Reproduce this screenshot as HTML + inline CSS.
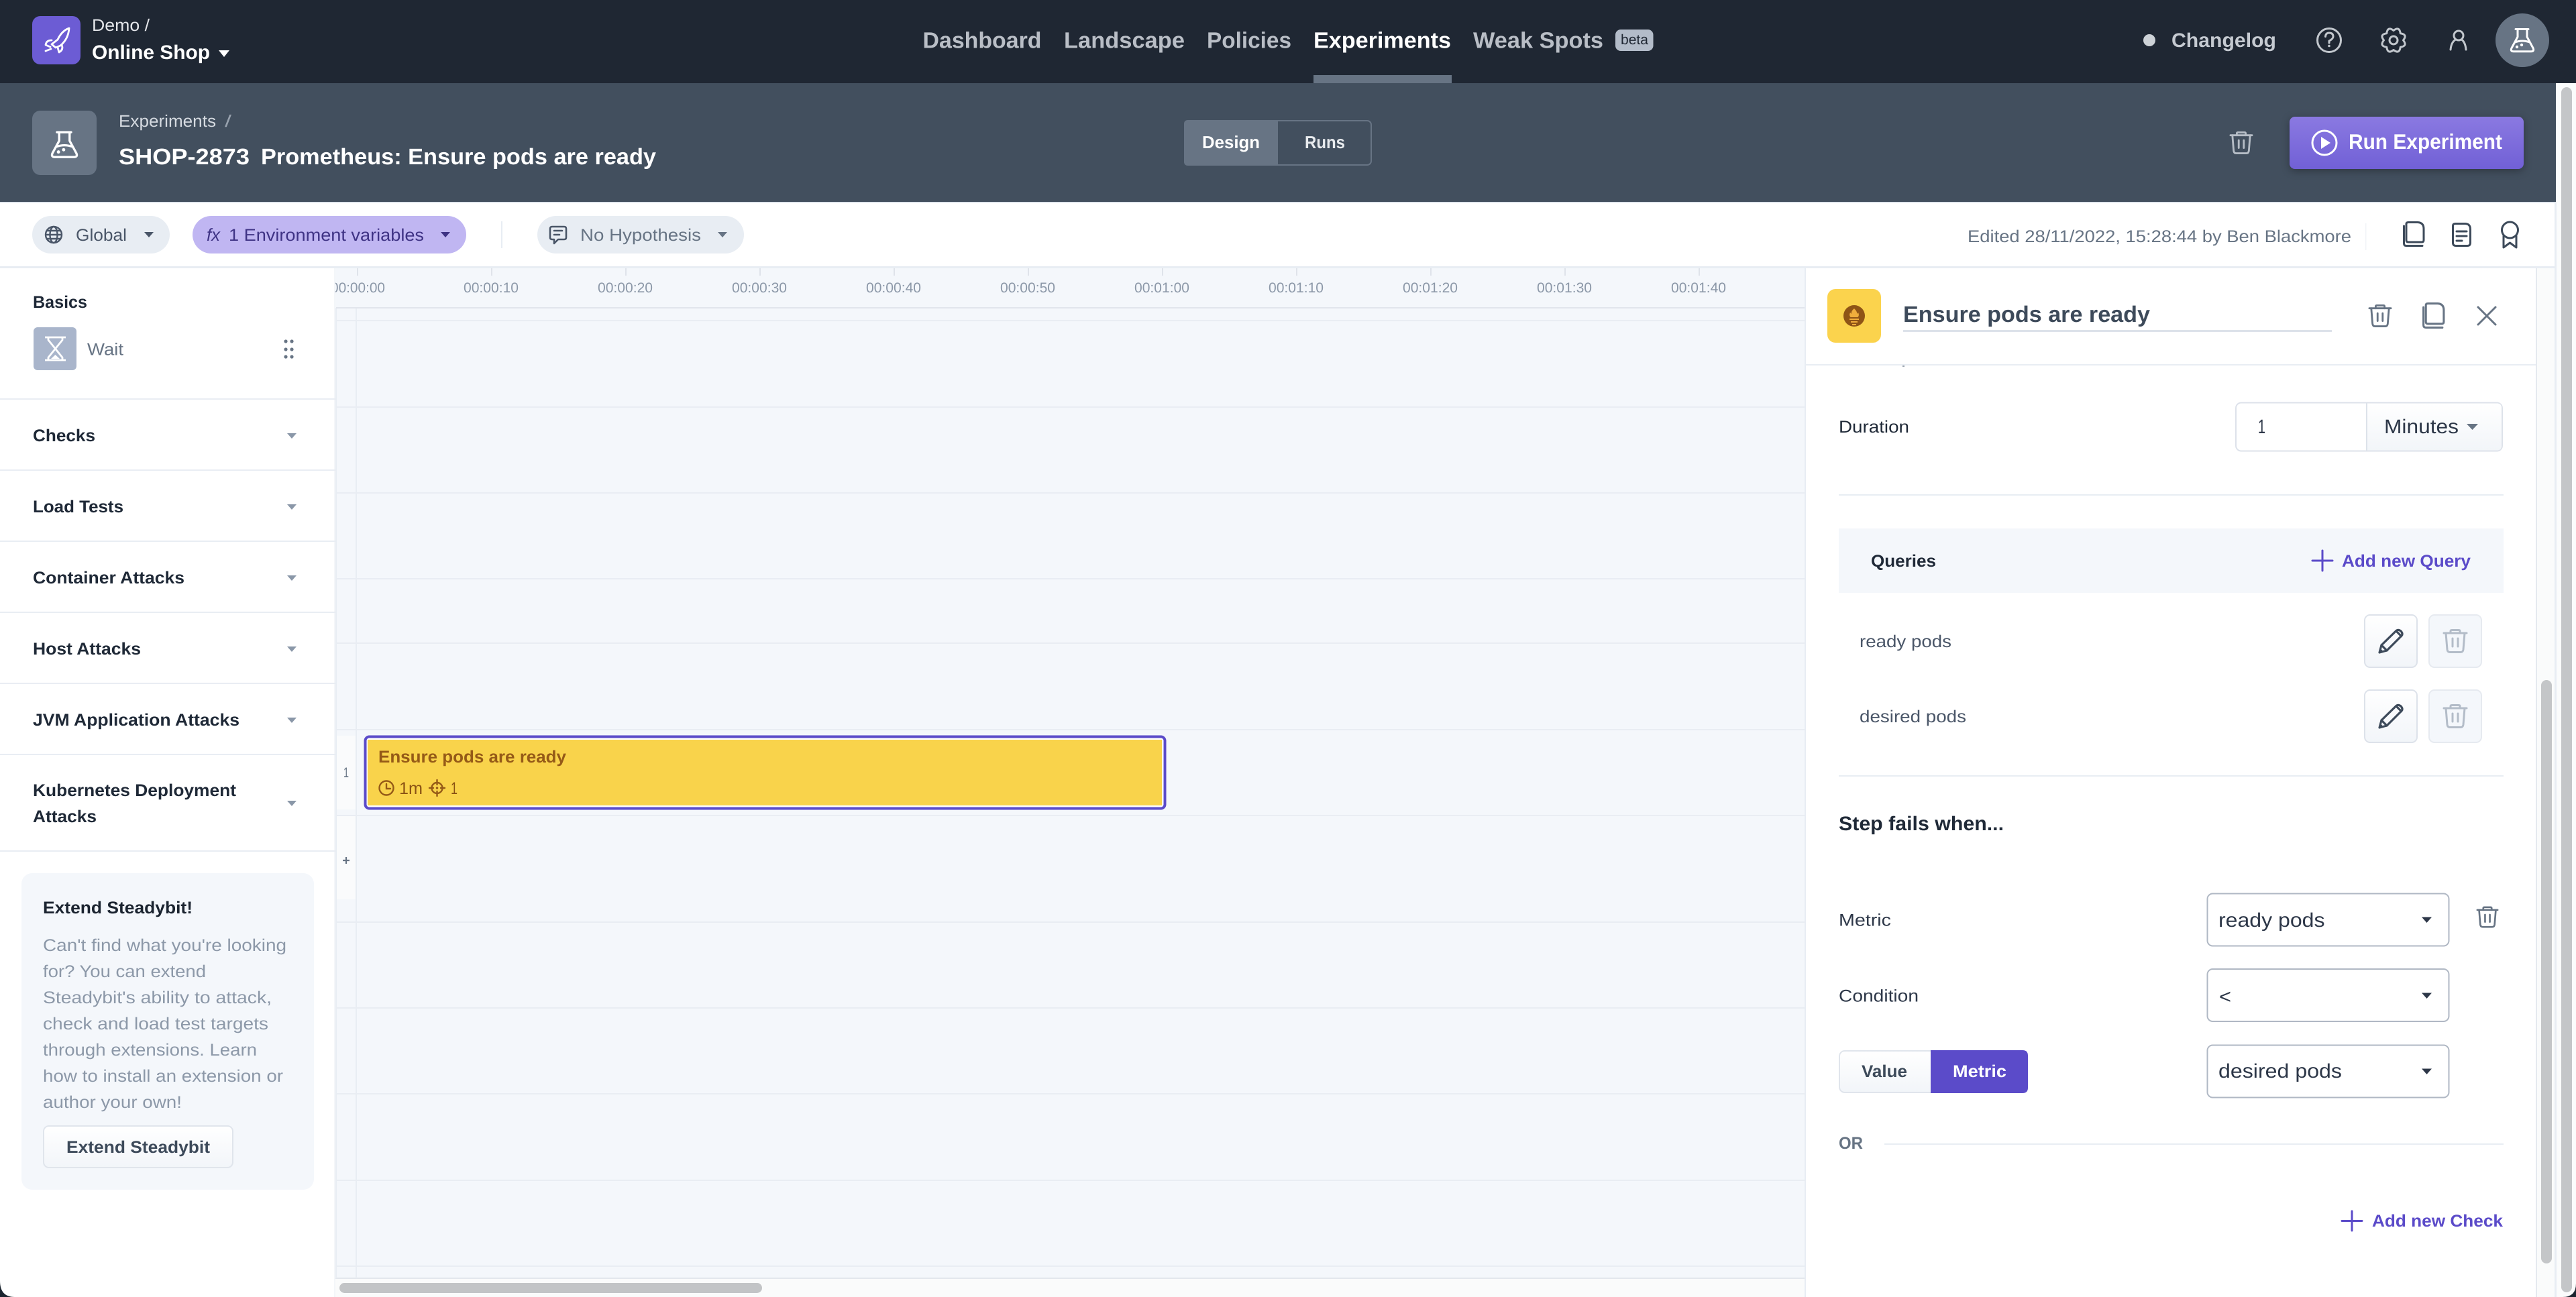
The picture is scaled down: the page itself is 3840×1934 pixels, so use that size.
<!DOCTYPE html>
<html lang="en">
<head>
<meta charset="utf-8">
<title>Steadybit - Experiment Design</title>
<style>
html,body{margin:0;padding:0;background:#fff;width:3840px;height:1934px;overflow:hidden}
svg{display:block}
text{font-family:"Liberation Sans",sans-serif;text-rendering:geometricPrecision;white-space:pre}
.b{font-weight:700;transform:translateY(-1px)}
</style>
</head>
<body>
<svg xmlns="http://www.w3.org/2000/svg" width="3840" height="1934" viewBox="0 0 3840 1934">
<defs>
<linearGradient id="gBtn" x1="0" y1="0" x2="0" y2="1"><stop offset="0" stop-color="#fff"/><stop offset="1" stop-color="#f2f5f9"/></linearGradient>
<linearGradient id="gRun" x1="0" y1="0" x2="0" y2="1"><stop offset="0" stop-color="#8a79e1"/><stop offset="1" stop-color="#7160d6"/></linearGradient>
<clipPath id="rulerClip"><rect x="500" y="400" width="2191" height="60"/></clipPath>
<symbol id="flask" viewBox="0 0 36 36" overflow="visible">
<g fill="none" stroke="currentColor" stroke-width="3" stroke-linecap="round" stroke-linejoin="round">
<path d="M8 1.5H27"/><path d="M11 2V13L1.8 30Q0 34.8 5 34.8H31Q36 34.8 34.2 30L25 13V2"/><path d="M7 21Q18 17 29 21"/>
</g>
<circle cx="10" cy="28" r="2.2" fill="currentColor"/><circle cx="17" cy="25" r="2.2" fill="currentColor"/>
</symbol>
<symbol id="trash" viewBox="0 0 36 36" overflow="visible">
<g fill="none" stroke="currentColor" stroke-width="3" stroke-linecap="round" stroke-linejoin="round">
<path d="M1 6H35"/><path d="M11 6V3Q11 1.5 13 1.5H23Q25 1.5 25 3V6"/><path d="M4 6L6 30.5Q6.5 34.5 10 34.5H26Q29.5 34.5 30 30.5L32 6"/><path d="M14 14V26"/><path d="M22 14V26"/>
</g>
</symbol>
<symbol id="pencil" viewBox="0 0 36 36" overflow="visible">
<g fill="none" stroke="currentColor" stroke-width="3.2" stroke-linecap="round" stroke-linejoin="round">
<path d="M1 35L4 24L26 2.5Q29 0 33 3Q36.5 7 34 10L12 32Z"/><path d="M4 24L12 32"/><path d="M26 3L33.5 10.5"/>
</g>
<path d="M1 35L2.5 29L7 33.5Z" fill="currentColor"/>
</symbol>
<symbol id="copy" viewBox="0 0 32 38" overflow="visible">
<g fill="none" stroke="currentColor" stroke-width="3" stroke-linecap="round" stroke-linejoin="round">
<path d="M8 1.5H22Q31 2 31 11V28Q31 31 28 31H8Q5 31 5 28V4Q5 1.5 8 1.5Z"/><path d="M1.5 7V33Q1.5 36.5 5 36.5H29"/>
</g>
</symbol>
</defs>

<!-- base -->
<rect width="3840" height="1934" fill="#fff"/>
<rect x="0" y="0" width="3840" height="124" fill="#1f2733"/>
<rect x="0" y="124" width="3810" height="177" fill="#424f5e"/>
<rect x="0" y="301" width="3810" height="2" fill="#e3e8ee"/>
<rect x="0" y="397" width="3810" height="3" fill="#e8edf3"/>

<!-- timeline -->
<rect x="500" y="400" width="2191" height="1506" fill="#f4f7fb"/>
<rect x="500" y="1906" width="2191" height="28" fill="#fafbfb"/>
<rect x="500" y="1905" width="2191" height="2" fill="#e3e7ed"/>
<rect x="506" y="1913" width="630" height="15" rx="7.5" fill="#c2c4c6"/>
<rect x="530" y="459" width="2" height="1447" fill="#e8edf3"/>
<rect x="500" y="459" width="2" height="1447" fill="#e8edf3"/>
<g fill="#e9edf3">
<rect x="501" y="458" width="2190" height="2" fill="#e1e5ec"/>
<rect x="501" y="477" width="2190" height="2"/>
<rect x="501" y="606" width="2190" height="2"/>
<rect x="501" y="734" width="2190" height="2"/>
<rect x="501" y="862" width="2190" height="2"/>
<rect x="501" y="958" width="2190" height="2"/>
<rect x="501" y="1087" width="2190" height="2"/>
<rect x="501" y="1215" width="2190" height="2"/>
<rect x="501" y="1374" width="2190" height="2"/>
<rect x="501" y="1502" width="2190" height="2"/>
<rect x="501" y="1630" width="2190" height="2"/>
<rect x="501" y="1759" width="2190" height="2"/>
<rect x="501" y="1887" width="2190" height="2"/>
</g>
<rect x="502" y="1097" width="28" height="110" fill="#fafbfc"/>
<rect x="502" y="1217" width="28" height="124" fill="#fafbfc"/>
<g fill="#dfe3ea">
<rect x="532" y="400" width="2" height="11"/><rect x="732" y="400" width="2" height="11"/><rect x="932" y="400" width="2" height="11"/><rect x="1132" y="400" width="2" height="11"/><rect x="1332" y="400" width="2" height="11"/><rect x="1532" y="400" width="2" height="11"/><rect x="1732" y="400" width="2" height="11"/><rect x="1932" y="400" width="2" height="11"/><rect x="2132" y="400" width="2" height="11"/><rect x="2332" y="400" width="2" height="11"/><rect x="2532" y="400" width="2" height="11"/>
</g>
<g clip-path="url(#rulerClip)" font-size="21" fill="#8c98a8">
<text x="493" y="436" textLength="81" lengthAdjust="spacingAndGlyphs">00:00:00</text>
<text x="691" y="436" textLength="82" lengthAdjust="spacingAndGlyphs">00:00:10</text>
<text x="891" y="436" textLength="82" lengthAdjust="spacingAndGlyphs">00:00:20</text>
<text x="1091" y="436" textLength="82" lengthAdjust="spacingAndGlyphs">00:00:30</text>
<text x="1291" y="436" textLength="82" lengthAdjust="spacingAndGlyphs">00:00:40</text>
<text x="1491" y="436" textLength="82" lengthAdjust="spacingAndGlyphs">00:00:50</text>
<text x="1691" y="436" textLength="82" lengthAdjust="spacingAndGlyphs">00:01:00</text>
<text x="1891" y="436" textLength="82" lengthAdjust="spacingAndGlyphs">00:01:10</text>
<text x="2091" y="436" textLength="82" lengthAdjust="spacingAndGlyphs">00:01:20</text>
<text x="2291" y="436" textLength="82" lengthAdjust="spacingAndGlyphs">00:01:30</text>
<text x="2491" y="436" textLength="82" lengthAdjust="spacingAndGlyphs">00:01:40</text>
</g>
<text x="512" y="1159" font-size="21" fill="#677484" textLength="8" lengthAdjust="spacingAndGlyphs">1</text>
<path d="M516 1278V1288M511 1283H521" stroke="#677484" stroke-width="2.2"/>

<!-- step block -->
<rect x="544.5" y="1098.5" width="1192" height="107" rx="6" fill="#fff" stroke="#5b4bc9" stroke-width="4"/>
<rect x="548" y="1103" width="1184" height="98" fill="#f9d34b"/>
<text x="564" y="1138" font-size="25.4" class="b" fill="#955a17" textLength="280" lengthAdjust="spacingAndGlyphs">Ensure pods are ready</text>
<g fill="none" stroke="#955a17" stroke-width="2.4" stroke-linecap="round">
<circle cx="576" cy="1175" r="10.5"/><path d="M576 1169V1176H582"/>
<circle cx="651.5" cy="1175" r="8"/><path d="M651.5 1163V1170M651.5 1180V1187M640 1175H646M657 1175H663"/>
</g>
<circle cx="651.5" cy="1175" r="1.8" fill="#955a17"/>
<text x="595" y="1184" font-size="25.4" fill="#8a5214" textLength="35" lengthAdjust="spacingAndGlyphs">1m</text>
<text x="672" y="1184" font-size="25.4" fill="#8a5214" textLength="10" lengthAdjust="spacingAndGlyphs">1</text>

<!-- top nav -->
<rect x="48" y="24" width="72" height="72" rx="12" fill="#6c5cd4"/>
<g fill="none" stroke="#fff" stroke-width="2.8" stroke-linejoin="round" stroke-linecap="round">
<path d="M103 42Q92 46 86 59L77 66L83 71L90 68Q102 58 103 42Z"/>
<path d="M77 60Q69 60 68 67L75 70"/>
<path d="M86 71L88 78Q95 74 92 67"/>
<path d="M68 76L76 73"/>
</g>
<text x="137" y="46" font-size="25" fill="#e4e6ea" textLength="86" lengthAdjust="spacingAndGlyphs">Demo /</text>
<text x="137" y="89" font-size="29.5" class="b" fill="#fff" textLength="176" lengthAdjust="spacingAndGlyphs">Online Shop</text>
<path d="M326 75H342L334 85Z" fill="#fff"/>

<g font-size="33.6" class="b" fill="#b9bec6">
<text x="1375.5" y="72.5" textLength="177" lengthAdjust="spacingAndGlyphs">Dashboard</text>
<text x="1586" y="72.5" textLength="180" lengthAdjust="spacingAndGlyphs">Landscape</text>
<text x="1799" y="72.5" textLength="126" lengthAdjust="spacingAndGlyphs">Policies</text>
<text x="1958" y="72.5" textLength="205" lengthAdjust="spacingAndGlyphs" fill="#fff">Experiments</text>
<text x="2196" y="72.5" textLength="194" lengthAdjust="spacingAndGlyphs">Weak Spots</text>
</g>
<rect x="1958" y="112" width="206" height="12" fill="#677484"/>
<rect x="2408" y="44" width="56.5" height="32" rx="8" fill="#b3bcc9"/>
<text x="2416" y="66" font-size="21" fill="#1f2733" textLength="41" lengthAdjust="spacingAndGlyphs">beta</text>

<circle cx="3204" cy="60" r="9" fill="#cdd2d7"/>
<text x="3237" y="71" font-size="29.5" class="b" fill="#c5cad1" textLength="156" lengthAdjust="spacingAndGlyphs">Changelog</text>
<g fill="none" stroke="#c2c7cd" stroke-width="3" stroke-linecap="round" stroke-linejoin="round">
<circle cx="3472" cy="60" r="17.5"/>
<path d="M3466.5 54.5Q3467 49 3472 49Q3478 49 3478 54.5Q3478 58 3472 61V64"/>
<path transform="translate(3568 60)" d="M14.5 0Q21.25 8.8 10.25 10.25Q8.8 21.25 0 14.5Q-8.8 21.25 -10.25 10.25Q-21.25 8.8 -14.5 0Q-21.25 -8.8 -10.25 -10.25Q-8.8 -21.25 0 -14.5Q8.8 -21.25 10.25 -10.25Q21.25 -8.8 14.5 0Z"/>
<circle cx="3568" cy="60" r="6"/>
<circle cx="3665" cy="53" r="7"/>
<path d="M3653 74Q3654 63 3660.5 59M3676 74Q3675 63 3669.5 59"/>
</g>
<circle cx="3472" cy="68.5" r="1.8" fill="#c2c7cd"/>
<circle cx="3760" cy="60" r="40" fill="#677484"/>
<use href="#flask" x="3742" y="42" width="36" height="36" color="#fff"/>

<!-- experiment header -->
<rect x="48" y="165" width="96" height="96" rx="12" fill="#677484"/>
<use href="#flask" x="76" y="194" width="40" height="43" color="#fff"/>
<text x="177" y="189" font-size="25" fill="#d5dae0" textLength="145" lengthAdjust="spacingAndGlyphs">Experiments</text>
<text x="335" y="189" font-size="25" fill="#98a2ae" textLength="10" lengthAdjust="spacingAndGlyphs">/</text>
<text x="177" y="246" font-size="33.6" class="b" fill="#fff" textLength="195" lengthAdjust="spacingAndGlyphs">SHOP-2873</text>
<text x="389" y="246" font-size="33.6" class="b" fill="#fff" textLength="589" lengthAdjust="spacingAndGlyphs">Prometheus: Ensure pods are ready</text>

<rect x="1766" y="180" width="278" height="66" rx="6" fill="#424f5e" stroke="#677484" stroke-width="2"/>
<path d="M1771 179H1905V247H1771Q1765 247 1765 241V185Q1765 179 1771 179Z" fill="#677484"/>
<text x="1792" y="222" font-size="26" class="b" fill="#fff" textLength="86" lengthAdjust="spacingAndGlyphs">Design</text>
<text x="1945" y="222" font-size="26" class="b" fill="#e8ebee" textLength="60" lengthAdjust="spacingAndGlyphs">Runs</text>

<use href="#trash" x="3324" y="196" width="34" height="34" color="#b6bdc6"/>
<rect x="3413" y="174" width="349" height="78" rx="8" fill="url(#gRun)" style="filter:drop-shadow(0 3px 6px rgba(0,0,0,.3))"/>
<circle cx="3465" cy="213" r="18" fill="none" stroke="#fff" stroke-width="3"/>
<path d="M3460 204L3474 213L3460 222Z" fill="#fff"/>
<text x="3501" y="223" font-size="31.5" class="b" fill="#fff" textLength="229" lengthAdjust="spacingAndGlyphs">Run Experiment</text>

<!-- toolbar -->
<rect x="48" y="322" width="205" height="56" rx="28" fill="#e8edf3"/>
<g fill="none" stroke="#4a5668" stroke-width="2.4">
<circle cx="80" cy="350" r="12"/><ellipse cx="80" cy="350" rx="5.5" ry="12"/><path d="M68 350H92M70 344H90M70 356H90"/>
</g>
<text x="113" y="359" font-size="25.4" fill="#4a5668" textLength="76" lengthAdjust="spacingAndGlyphs">Global</text>
<path d="M215 346H229L222 354Z" fill="#4a5668"/>
<rect x="287" y="322" width="408" height="56" rx="28" fill="#c0b6f2"/>
<text x="308" y="359" font-size="26" font-style="italic" fill="#3f3385" textLength="20" lengthAdjust="spacingAndGlyphs">fx</text>
<text x="341" y="359" font-size="25.4" fill="#3f3385" textLength="291" lengthAdjust="spacingAndGlyphs">1 Environment variables</text>
<path d="M657 346H671L664 354Z" fill="#3f3385"/>
<rect x="747" y="330" width="2" height="40" fill="#e8edf3"/>
<rect x="801" y="322" width="308" height="56" rx="28" fill="#e8edf3"/>
<g fill="none" stroke="#4a5668" stroke-width="2.6" stroke-linejoin="round" stroke-linecap="round">
<path d="M823 338H841Q844 338 844 341V354Q844 357 841 357H832L826 363V357H823Q820 357 820 354V341Q820 338 823 338Z"/>
<path d="M826 344H838M826 350H834"/>
</g>
<text x="865" y="359" font-size="25.4" fill="#677484" textLength="180" lengthAdjust="spacingAndGlyphs">No Hypothesis</text>
<path d="M1070 346H1084L1077 354Z" fill="#677484"/>

<text x="2933" y="361" font-size="25.4" fill="#677484" textLength="572" lengthAdjust="spacingAndGlyphs">Edited 28/11/2022, 15:28:44 by Ben Blackmore</text>
<rect x="3526" y="333" width="1.5" height="40" fill="#f1f4f7"/>
<use href="#copy" x="3582" y="330" width="32" height="38" color="#3d4a5a"/>
<g fill="none" stroke="#3d4a5a" stroke-width="3" stroke-linejoin="round" stroke-linecap="round">
<path d="M3660 333.5H3675Q3682.5 334 3682.5 342V362Q3682.5 366.5 3678 366.5H3661Q3656.5 366.5 3656.5 362V337Q3656.5 333.5 3660 333.5Z"/>
<path d="M3662 345H3677M3662 352H3677M3662 359H3670"/>
<circle cx="3741.5" cy="343" r="12"/>
<path d="M3732 352V369L3741.5 362L3751 369V352"/>
</g>

<!-- sidebar -->
<rect x="498" y="400" width="2" height="1534" fill="#f4f6f9"/>
<text x="49" y="460" font-size="25.4" class="b" fill="#1f2937" textLength="81" lengthAdjust="spacingAndGlyphs">Basics</text>
<rect x="50" y="488" width="64" height="64" rx="6" fill="#a9b5cb"/>
<g fill="none" stroke="#fff" stroke-width="2.8" stroke-linejoin="round">
<path d="M67 503H98M67 537H98"/>
<path d="M72 503V507L82.5 520L93 507V503"/>
<path d="M72 537V533L82.5 520L93 533V537"/>
</g>
<path d="M76 535L82.5 529L89 535Z" fill="#fff"/>
<text x="130" y="529.5" font-size="25.4" fill="#677484" textLength="54" lengthAdjust="spacingAndGlyphs">Wait</text>
<g fill="#677484">
<circle cx="426" cy="509" r="2.6"/><circle cx="435" cy="509" r="2.6"/><circle cx="426" cy="521" r="2.6"/><circle cx="435" cy="521" r="2.6"/><circle cx="426" cy="532" r="2.6"/><circle cx="435" cy="532" r="2.6"/>
</g>
<g fill="#e9edf3">
<rect x="0" y="594" width="500" height="2"/><rect x="0" y="700" width="500" height="2"/><rect x="0" y="806" width="500" height="2"/><rect x="0" y="912" width="500" height="2"/><rect x="0" y="1018" width="500" height="2"/><rect x="0" y="1124" width="500" height="2"/><rect x="0" y="1268" width="500" height="2"/>
</g>
<g font-size="25.4" class="b" fill="#1f2937">
<text x="49" y="659" textLength="93" lengthAdjust="spacingAndGlyphs">Checks</text>
<text x="49" y="765" textLength="135" lengthAdjust="spacingAndGlyphs">Load Tests</text>
<text x="49" y="871" textLength="226" lengthAdjust="spacingAndGlyphs">Container Attacks</text>
<text x="49" y="977" textLength="161" lengthAdjust="spacingAndGlyphs">Host Attacks</text>
<text x="49" y="1083" textLength="308" lengthAdjust="spacingAndGlyphs">JVM Application Attacks</text>
<text x="49" y="1188" textLength="303" lengthAdjust="spacingAndGlyphs">Kubernetes Deployment</text>
<text x="49" y="1227" textLength="95" lengthAdjust="spacingAndGlyphs">Attacks</text>
</g>
<g fill="#8a97a8">
<path d="M428 646H442L435 654Z"/><path d="M428 752H442L435 760Z"/><path d="M428 858H442L435 866Z"/><path d="M428 964H442L435 972Z"/><path d="M428 1070H442L435 1078Z"/><path d="M428 1194H442L435 1202Z"/>
</g>

<!-- extend card -->
<rect x="32" y="1302" width="436" height="472" rx="16" fill="#f4f7fb"/>
<text x="64" y="1363" font-size="25.4" class="b" fill="#1b2430" textLength="223" lengthAdjust="spacingAndGlyphs">Extend Steadybit!</text>
<g font-size="25.4" fill="#8c98a8">
<text x="64" y="1418" textLength="363" lengthAdjust="spacingAndGlyphs">Can't find what you're looking</text>
<text x="64" y="1457" textLength="243" lengthAdjust="spacingAndGlyphs">for? You can extend</text>
<text x="64" y="1496" textLength="341" lengthAdjust="spacingAndGlyphs">Steadybit's ability to attack,</text>
<text x="64" y="1535" textLength="336" lengthAdjust="spacingAndGlyphs">check and load test targets</text>
<text x="64" y="1574" textLength="319" lengthAdjust="spacingAndGlyphs">through extensions. Learn</text>
<text x="64" y="1613" textLength="358" lengthAdjust="spacingAndGlyphs">how to install an extension or</text>
<text x="64" y="1652" textLength="207" lengthAdjust="spacingAndGlyphs">author your own!</text>
</g>
<rect x="65" y="1679" width="282" height="62" rx="8" fill="url(#gBtn)" stroke="#e0e5ec" stroke-width="2"/>
<text x="99" y="1720" font-size="25.4" class="b" fill="#3d4a5a" textLength="214" lengthAdjust="spacingAndGlyphs">Extend Steadybit</text>

<!-- right panel -->
<rect x="2691" y="400" width="1090" height="1534" fill="#fff"/>
<rect x="2690" y="400" width="2" height="1534" fill="#e8edf3"/>
<rect x="3780" y="400" width="2" height="1534" fill="#e5e9ef"/>
<rect x="3782" y="400" width="27" height="1534" fill="#fafbfb"/>
<rect x="3808" y="303" width="3" height="1631" fill="#e8edf3"/>
<rect x="3788" y="1014" width="16" height="870" rx="8" fill="#c4c6c8"/>
<rect x="3811" y="124" width="29" height="1810" fill="#fbfcfc"/>
<rect x="3810" y="124" width="1.5" height="179" fill="#f3f4f6"/>
<rect x="3818" y="130" width="16" height="1797" rx="8" fill="#c4c6c8"/>

<rect x="2724" y="431" width="80" height="80" rx="12" fill="#fbd34d"/>
<circle cx="2764" cy="471" r="16" fill="#8f5416"/>
<path d="M2764 460Q2769 465 2768 468L2770 466Q2772 470 2769.5 473H2758.5Q2756 470 2758 466L2760 468Q2759 464 2764 460Z" fill="#f0ad3c"/>
<path d="M2757 476H2771M2759 480H2769M2761 484H2767" stroke="#f0ad3c" stroke-width="2" fill="none"/>
<text x="2837" y="481" font-size="33.6" class="b" fill="#3d4a5a" textLength="368" lengthAdjust="spacingAndGlyphs">Ensure pods are ready</text>
<rect x="2837" y="492" width="639" height="3" fill="#dde2ea"/>
<use href="#trash" x="3531" y="454" width="34" height="34" color="#677484"/>
<use href="#copy" x="3611" y="451" width="33" height="39" color="#677484"/>
<path d="M3694 458L3720 484M3720 458L3694 484" stroke="#677484" stroke-width="3" stroke-linecap="round"/>
<rect x="2691" y="543" width="1089" height="2" fill="#e8edf3"/>
<rect x="2836" y="545" width="3" height="2" fill="#9aa3ae"/>

<text x="2741" y="645" font-size="25.4" fill="#1f2937" textLength="105" lengthAdjust="spacingAndGlyphs">Duration</text>
<rect x="3333" y="600.5" width="397" height="72" rx="8" fill="#fff" stroke="#dde2ea" stroke-width="2"/>
<path d="M3528 601.5H3722Q3729 601.5 3729 608.5V664.5Q3729 671.5 3722 671.5H3528Z" fill="url(#gBtn)"/>
<rect x="3527" y="600" width="2" height="73" fill="#dde2ea"/>
<text x="3366" y="646" font-size="29.5" fill="#2d3748" textLength="11" lengthAdjust="spacingAndGlyphs">1</text>
<text x="3554" y="646" font-size="29.5" fill="#2d3748" textLength="111" lengthAdjust="spacingAndGlyphs">Minutes</text>
<path d="M3677 632H3694L3685.5 641Z" fill="#677484"/>
<rect x="2741" y="737" width="991" height="2" fill="#e8edf3"/>

<rect x="2741" y="788" width="991" height="96" fill="#f4f7fb"/>
<text x="2789" y="846" font-size="25.4" class="b" fill="#1f2937" textLength="97" lengthAdjust="spacingAndGlyphs">Queries</text>
<path d="M3462 821V851M3447 836H3477" stroke="#5b4bc9" stroke-width="3" stroke-linecap="round"/>
<text x="3491" y="846" font-size="25.4" class="b" fill="#5b4bc9" textLength="192" lengthAdjust="spacingAndGlyphs">Add new Query</text>

<text x="2772" y="965" font-size="25.4" fill="#4a5668" textLength="137" lengthAdjust="spacingAndGlyphs">ready pods</text>
<text x="2772" y="1077" font-size="25.4" fill="#4a5668" textLength="159" lengthAdjust="spacingAndGlyphs">desired pods</text>
<rect x="3525" y="917" width="78" height="78" rx="8" fill="url(#gBtn)" stroke="#dde2ea" stroke-width="2"/>
<rect x="3621" y="917" width="78" height="78" rx="8" fill="#f4f7fb" stroke="#e6eaf0" stroke-width="2"/>
<rect x="3525" y="1029" width="78" height="78" rx="8" fill="url(#gBtn)" stroke="#dde2ea" stroke-width="2"/>
<rect x="3621" y="1029" width="78" height="78" rx="8" fill="#f4f7fb" stroke="#e6eaf0" stroke-width="2"/>
<use href="#pencil" x="3546" y="938" width="36" height="36" color="#3d4a5a"/>
<use href="#pencil" x="3546" y="1050" width="36" height="36" color="#3d4a5a"/>
<use href="#trash" x="3642" y="938" width="36" height="36" color="#b3bcc8"/>
<use href="#trash" x="3642" y="1050" width="36" height="36" color="#b3bcc8"/>
<rect x="2741" y="1156" width="991" height="2" fill="#e8edf3"/>

<text x="2741" y="1239" font-size="29.5" class="b" fill="#1f2937" textLength="246" lengthAdjust="spacingAndGlyphs">Step fails when...</text>

<text x="2741" y="1380.5" font-size="25.4" fill="#2d3748" textLength="78" lengthAdjust="spacingAndGlyphs">Metric</text>
<rect x="3290.5" y="1332.5" width="360" height="78" rx="8" fill="#fff" stroke="#b0b8c4" stroke-width="2"/>
<text x="3307" y="1382" font-size="29.5" fill="#2d3748" textLength="158.5" lengthAdjust="spacingAndGlyphs">ready pods</text>
<path d="M3610 1367.5H3625L3617.5 1376Z" fill="#2d3748"/>
<use href="#trash" x="3692" y="1351" width="32" height="33" color="#677484"/>

<text x="2741" y="1493.5" font-size="25.4" fill="#2d3748" textLength="119" lengthAdjust="spacingAndGlyphs">Condition</text>
<rect x="3290.5" y="1445" width="360" height="78" rx="8" fill="#fff" stroke="#b0b8c4" stroke-width="2"/>
<text x="3308" y="1496" font-size="29.5" fill="#2d3748" textLength="18" lengthAdjust="spacingAndGlyphs">&lt;</text>
<path d="M3610 1480.5H3625L3617.5 1489Z" fill="#2d3748"/>

<rect x="2742" y="1567" width="279" height="62" rx="8" fill="url(#gBtn)" stroke="#e0e5ec" stroke-width="2"/>
<path d="M2878 1566H3015Q3023 1566 3023 1574V1622Q3023 1630 3015 1630H2878Z" fill="#5b4bc9"/>
<text x="2775" y="1607" font-size="25.4" class="b" fill="#3d4a5a" textLength="68" lengthAdjust="spacingAndGlyphs">Value</text>
<text x="2911" y="1607" font-size="25.4" class="b" fill="#fff" textLength="80" lengthAdjust="spacingAndGlyphs">Metric</text>
<rect x="3290.5" y="1558.5" width="360" height="78" rx="8" fill="#fff" stroke="#b0b8c4" stroke-width="2"/>
<text x="3307" y="1607" font-size="29.5" fill="#2d3748" textLength="184" lengthAdjust="spacingAndGlyphs">desired pods</text>
<path d="M3610 1593.5H3625L3617.5 1602Z" fill="#2d3748"/>

<text x="2741" y="1714" font-size="25.4" class="b" fill="#677484" textLength="36" lengthAdjust="spacingAndGlyphs">OR</text>
<rect x="2809" y="1705" width="923" height="2" fill="#e8edf3"/>
<path d="M3506 1806V1835M3491 1820.5H3521" stroke="#5b4bc9" stroke-width="3" stroke-linecap="round"/>
<text x="3536" y="1830" font-size="25.4" class="b" fill="#5b4bc9" textLength="195" lengthAdjust="spacingAndGlyphs">Add new Check</text>

<!-- window corners -->
<path d="M0 1934V1910Q0 1934 22 1934Z" fill="#1c2530"/>
<path d="M3840 1934V1914Q3840 1934 3820 1934Z" fill="#1c2530"/>
</svg>
</body>
</html>
